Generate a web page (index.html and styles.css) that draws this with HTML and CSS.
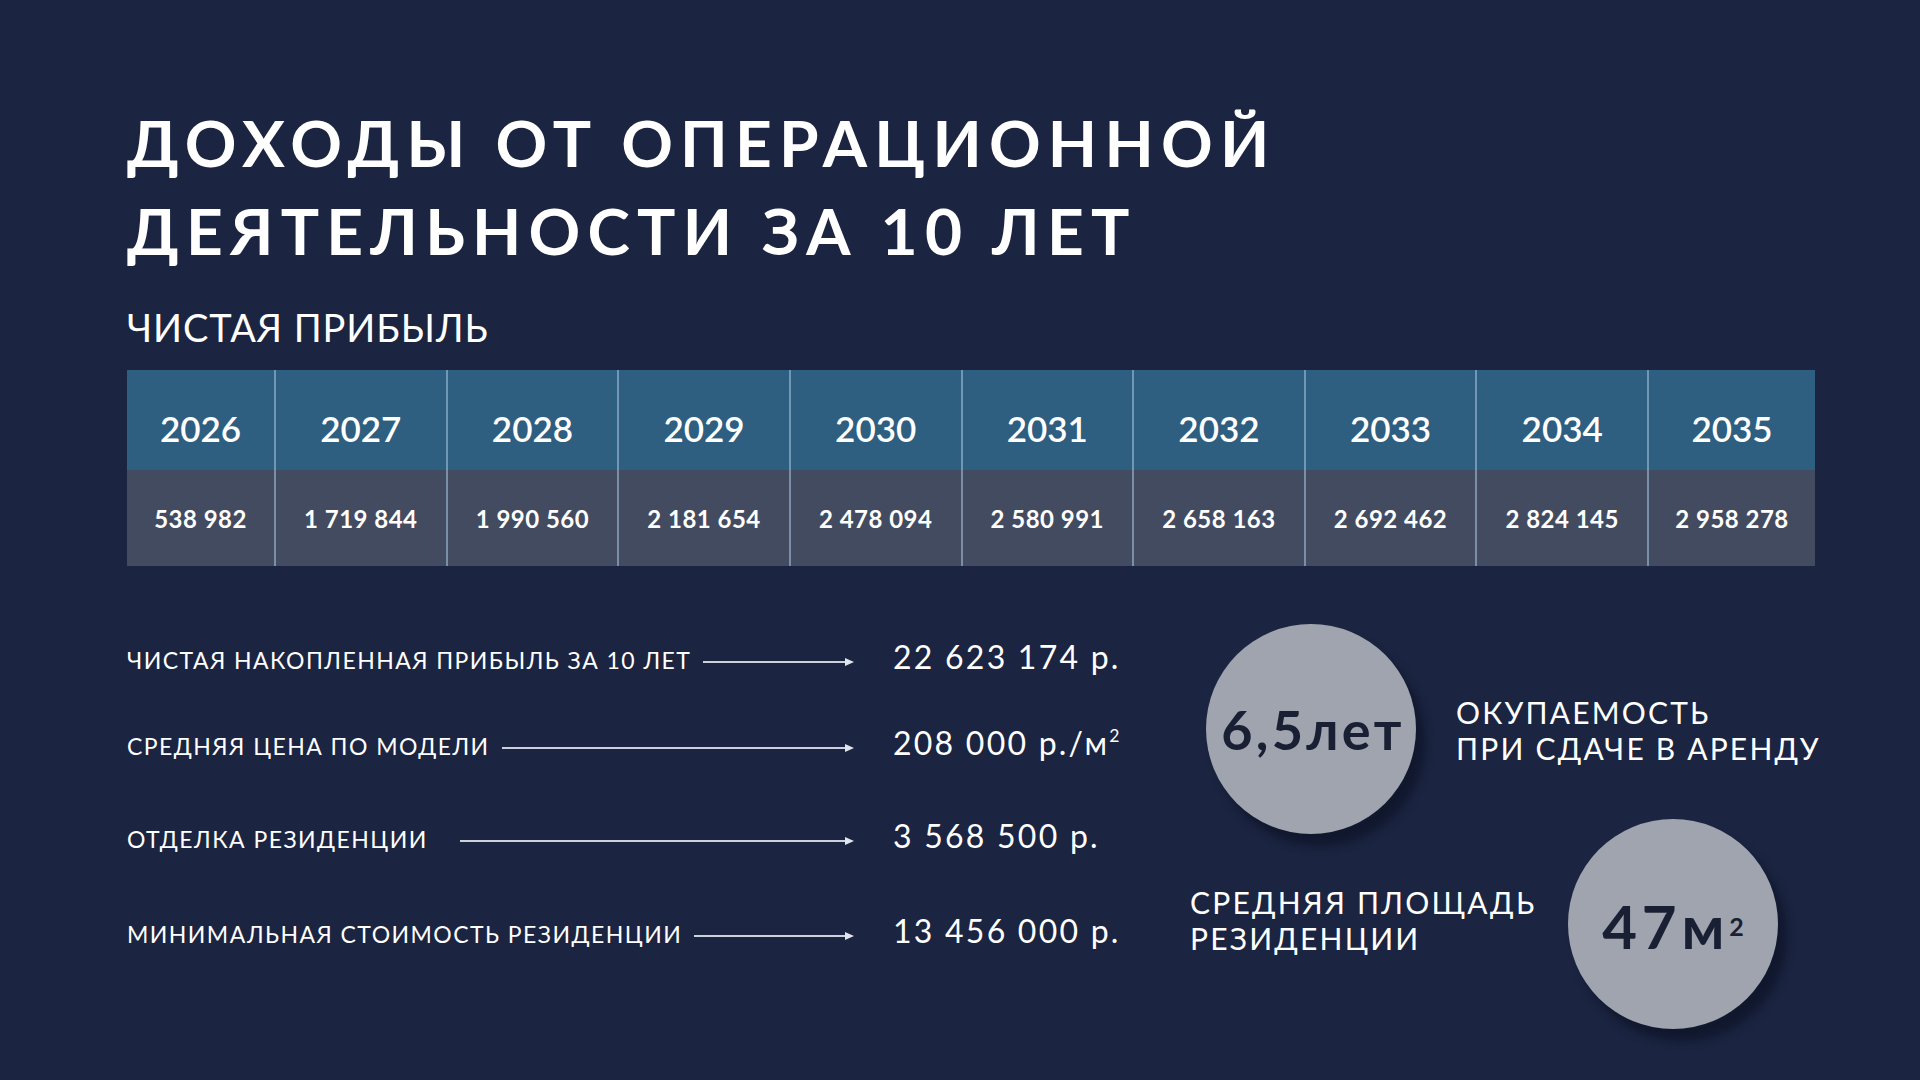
FILE: index.html
```html
<!DOCTYPE html>
<html lang="ru">
<head>
<meta charset="utf-8">
<title>Доходы от операционной деятельности за 10 лет</title>
<link rel="stylesheet" href="styles.css">
</head>
<body>
<main class="slide">
  <h1 class="title">ДОХОДЫ ОТ ОПЕРАЦИОННОЙ<br>ДЕЯТЕЛЬНОСТИ ЗА 10 ЛЕТ</h1>
  <h2 class="subtitle">ЧИСТАЯ ПРИБЫЛЬ</h2>

  <section class="table">
    <div class="cell head">2026</div>
    <div class="cell head">2027</div>
    <div class="cell head">2028</div>
    <div class="cell head">2029</div>
    <div class="cell head">2030</div>
    <div class="cell head">2031</div>
    <div class="cell head">2032</div>
    <div class="cell head">2033</div>
    <div class="cell head">2034</div>
    <div class="cell head">2035</div>
    <div class="cell data">538 982</div>
    <div class="cell data">1 719 844</div>
    <div class="cell data">1 990 560</div>
    <div class="cell data">2 181 654</div>
    <div class="cell data">2 478 094</div>
    <div class="cell data">2 580 991</div>
    <div class="cell data">2 658 163</div>
    <div class="cell data">2 692 462</div>
    <div class="cell data">2 824 145</div>
    <div class="cell data">2 958 278</div>
  </section>

  <section class="bottom">
    <div class="facts">
      <div class="fact r1">
        <span class="label">ЧИСТАЯ НАКОПЛЕННАЯ ПРИБЫЛЬ ЗА 10 ЛЕТ</span>
        <span class="arrow"></span>
        <span class="value">22 623 174 р.</span>
      </div>
      <div class="fact r2">
        <span class="label">СРЕДНЯЯ ЦЕНА ПО МОДЕЛИ</span>
        <span class="arrow"></span>
        <span class="value">208 000 р./м<sup>2</sup></span>
      </div>
      <div class="fact r3">
        <span class="label">ОТДЕЛКА РЕЗИДЕНЦИИ</span>
        <span class="arrow wide"></span>
        <span class="value">3 568 500 р.</span>
      </div>
      <div class="fact r4">
        <span class="label">МИНИМАЛЬНАЯ СТОИМОСТЬ РЕЗИДЕНЦИИ</span>
        <span class="arrow"></span>
        <span class="value">13 456 000 р.</span>
      </div>
    </div>

    <div class="stats">
      <div class="stat first">
        <div class="circle">6,5лет</div>
        <p class="stat-text">ОКУПАЕМОСТЬ<br>ПРИ СДАЧЕ В АРЕНДУ</p>
      </div>
      <div class="stat second">
        <p class="stat-text">СРЕДНЯЯ ПЛОЩАДЬ<br>РЕЗИДЕНЦИИ</p>
        <div class="circle">47м<sup>2</sup></div>
      </div>
    </div>
  </section>
</main>
</body>
</html>
```

FILE: styles.css
```css
* { box-sizing: border-box; }

html, body {
  margin: 0;
  padding: 0;
  width: 1920px;
  height: 1080px;
  overflow: hidden;
  background: #1b2440;
  color: #ffffff;
  font-family: Lato, "Noto Sans", "DejaVu Sans", sans-serif;
}

.slide {
  padding: 99px 0 0 127px;
}

.title {
  margin: 0;
  font-size: 64px;
  line-height: 88px;
  font-weight: 700;
  letter-spacing: 0.113em;
  white-space: nowrap;
}

.subtitle {
  margin: 29px 0 0 0;
  font-size: 38px;
  line-height: 46px;
  font-weight: 400;
  letter-spacing: 0.025em;
}

.table {
  margin-top: 20px;
  width: 1688px;
  display: grid;
  grid-template-columns: 147px repeat(8, 1fr) 168px;
  grid-template-rows: 100px 96px;
}

.cell {
  display: flex;
  align-items: center;
  justify-content: center;
  color: #ffffff;
  border-left: 2px solid rgba(170, 198, 228, 0.55);
}

.cell:nth-child(10n + 1) { border-left: none; }

.head {
  background: #2e5e80;
  font-size: 35px;
  font-weight: 600;
  padding-top: 16px;
}

.data {
  background: #434b61;
  font-size: 24px;
  font-weight: 700;
  letter-spacing: 0.02em;
}

.bottom {
  display: flex;
  align-items: flex-start;
  margin-top: 58px;
}

.facts {
  display: flex;
  flex-direction: column;
  width: 1006px;
  padding-top: 13px;
}

.fact {
  display: flex;
  align-items: baseline;
  height: 40px;
}

.fact.r2 { margin-top: 46px; }
.fact.r3 { margin-top: 53px; }
.fact.r4 { margin-top: 55px; }

.label {
  font-size: 23px;
  line-height: 40px;
  white-space: nowrap;
  letter-spacing: 0.063em;
}

.arrow {
  flex: 1;
  height: 2px;
  margin-left: 12px;
  background: #cdd1db;
  position: relative;
  top: -6px;
}

.arrow.wide { margin-left: 32px; }

.arrow::after {
  content: "";
  position: absolute;
  right: -2px;
  top: -3px;
  border-left: 9px solid #e2e5ec;
  border-top: 4px solid transparent;
  border-bottom: 4px solid transparent;
}

.value {
  flex: 0 0 240px;
  width: 240px;
  margin-left: 41px;
  font-size: 32px;
  line-height: 40px;
  letter-spacing: 0.07em;
  white-space: nowrap;
}

.value sup {
  font-size: 0.55em;
  line-height: 0;
  vertical-align: 0.75em;
  letter-spacing: 0;
}

.stats {
  margin-left: 57px;
  display: flex;
  flex-direction: column;
}

.stat {
  display: flex;
  align-items: center;
}

.stat.first {
  padding-left: 16px;
  gap: 40px;
}

.stat.second {
  margin-top: -15px;
  gap: 31px;
}

.circle {
  flex: 0 0 210px;
  width: 210px;
  height: 210px;
  border-radius: 50%;
  background: #9fa4af;
  color: #1a2034;
  font-weight: 700;
  display: flex;
  align-items: center;
  justify-content: center;
  box-shadow: 9px 12px 8px rgba(14, 20, 40, 0.75);
}

.first .circle {
  font-size: 54px;
  letter-spacing: 0.06em;
  padding-left: 4px;
}

.second .circle {
  font-size: 60px;
  letter-spacing: 0.08em;
  padding-top: 4px;
}

.circle sup {
  font-size: 25px;
  line-height: 0;
  vertical-align: 26px;
  letter-spacing: 0;
}

.stat-text {
  margin: 0;
  font-size: 30px;
  line-height: 36px;
  letter-spacing: 0.073em;
  white-space: nowrap;
}

.first .stat-text { margin-top: 2px; }
.second .stat-text { width: 347px; margin-bottom: 8px; }
```
